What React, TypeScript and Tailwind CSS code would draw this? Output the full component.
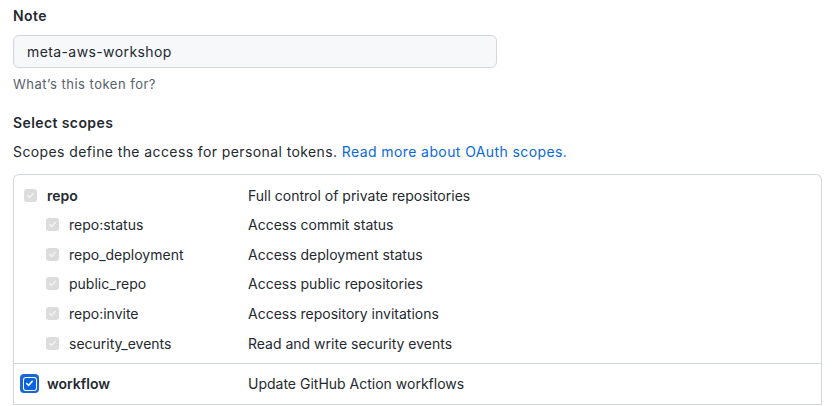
const scopes = [
  { name: "repo:status", desc: "Access commit status" },
  { name: "repo_deployment", desc: "Access deployment status" },
  { name: "public_repo", desc: "Access public repositories" },
  { name: "repo:invite", desc: "Access repository invitations" },
  { name: "security_events", desc: "Read and write security events" },
];

function DisabledCheck() {
  return (
    <span className="w-[13px] h-[13px] rounded-[3px] bg-[#dcdcdc] flex items-center justify-center shrink-0">
      <svg width="9" height="9" viewBox="0 0 10 10" fill="none">
        <path d="M2 5.2l2 2L8 2.8" stroke="#f2f2f2" strokeWidth="1.8" strokeLinecap="round" strokeLinejoin="round" />
      </svg>
    </span>
  );
}

function CheckedBox() {
  return (
    <span className="w-[19px] h-[19px] rounded-[4px] bg-[#1a66d6] flex items-center justify-center shrink-0">
      <span className="w-[14px] h-[14px] rounded-[3px] bg-white flex items-center justify-center">
        <span className="w-[12px] h-[12px] rounded-[2px] bg-[#0a62e0] flex items-center justify-center">
          <svg width="9" height="9" viewBox="0 0 10 10" fill="none">
            <path d="M2 5.2l2 2L8 2.6" stroke="#fff" strokeWidth="1.8" strokeLinecap="round" strokeLinejoin="round" />
          </svg>
        </span>
      </span>
    </span>
  );
}

export default function App() {
  return (
    <div className="min-h-screen bg-white font-['Inter',sans-serif] text-[#24292f] px-[13px] pt-[6px] tracking-[0.4px]">
      {/* Note */}
      <div className="text-[14px] font-semibold leading-[20px]">Note</div>
      <div className="mt-[9px] w-[484px] h-[33px] rounded-[6px] border border-[#d0d7de] bg-[#f6f8fa] flex items-center px-[13px] text-[14px]">
        meta-aws-workshop
      </div>
      <div className="mt-[7px] text-[13px] text-[#57606a] leading-[18px] tracking-[0.5px]">What’s this token for?</div>

      {/* Scopes */}
      <div className="mt-[20px] text-[14px] font-semibold leading-[20px]">Select scopes</div>
      <div className="mt-[9px] text-[14px] leading-[20px]">
        Scopes define the access for personal tokens.{" "}
        <span className="text-[#0969da]">Read more about OAuth scopes.</span>
      </div>

      <div className="mt-[12px] w-[809px] border border-[#d0d7de] rounded-t-[6px] border-b-0 text-[14px] tracking-normal">
        <div className="pt-[6px] pb-[5px]">
          <div className="flex items-center h-[29px] pl-[10px]">
            <DisabledCheck />
            <span className="ml-[10px] w-[201px] font-semibold">repo</span>
            <span>Full control of private repositories</span>
          </div>
          {scopes.map((s) => (
            <div key={s.name} className="flex items-center h-[29.6px] pl-[32px]">
              <DisabledCheck />
              <span className="ml-[10px] w-[179px]">{s.name}</span>
              <span>{s.desc}</span>
            </div>
          ))}
        </div>
        <div className="border-t border-[#d0d7de] h-[42px] flex items-center pl-[6px] border-b">
          <CheckedBox />
          <span className="ml-[8px] w-[201px] font-semibold">workflow</span>
          <span>Update GitHub Action workflows</span>
        </div>
      </div>
    </div>
  );
}
